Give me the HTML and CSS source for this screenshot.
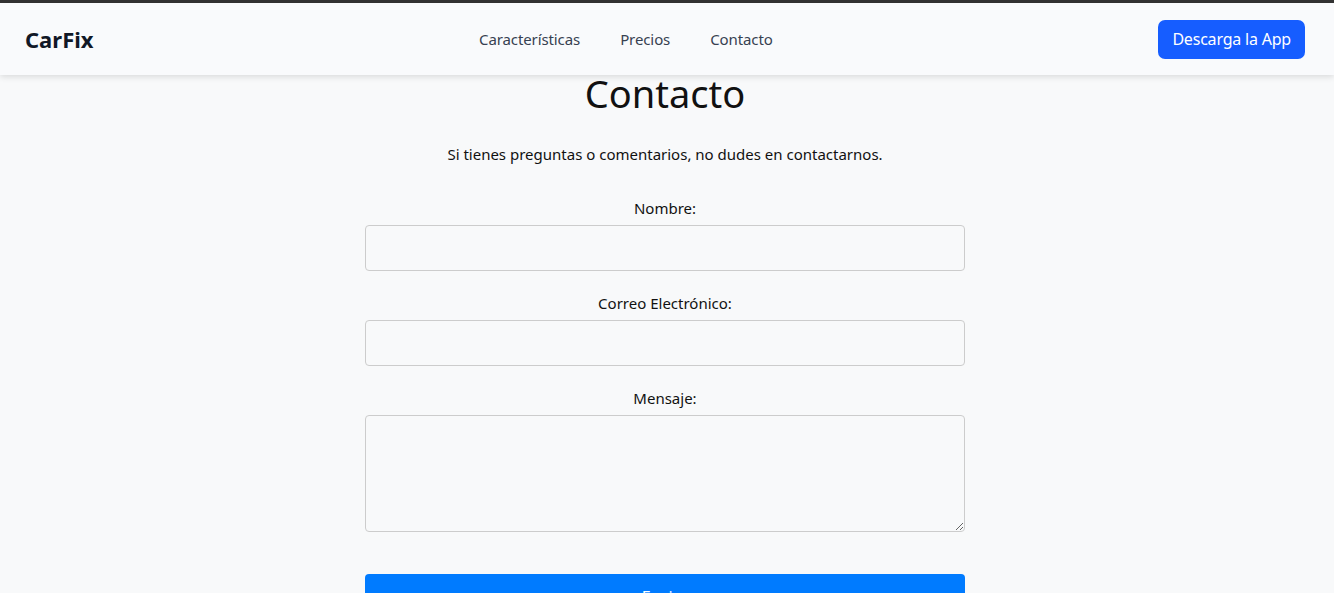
FILE: index.html
```html
<!DOCTYPE html>
<html lang="es">
<head>
<meta charset="utf-8">
<title>CarFix - Contacto</title>
<link rel="stylesheet" href="styles.css">
</head>
<body>
<div class="topline"></div>
<header class="header">
  <div class="logo">CarFix</div>
  <nav class="nav">
    <a href="#" class="nav-link">Características</a>
    <a href="#" class="nav-link">Precios</a>
    <a href="#" class="nav-link">Contacto</a>
  </nav>
  <a href="#" class="cta">Descarga la App</a>
</header>
<main class="main">
  <h1 class="title">Contacto</h1>
  <p class="lead">Si tienes preguntas o comentarios, no dudes en contactarnos.</p>
  <form class="form">
    <label class="label" for="nombre">Nombre:</label>
    <input class="field" id="nombre" type="text">
    <label class="label" for="correo">Correo Electrónico:</label>
    <input class="field" id="correo" type="email">
    <label class="label" for="mensaje">Mensaje:</label>
    <textarea class="field area" id="mensaje"></textarea>
    <button class="submit" type="button">Enviar</button>
  </form>
</main>
</body>
</html>
```
FILE: styles.css
```css
* { box-sizing: border-box; }
html, body { margin: 0; padding: 0; }
body {
  background: #f8f9fa;
  font-family: "Noto Sans", "Open Sans", sans-serif;
  color: #111;
  overflow: hidden;
}
.topline { height: 3px; background: #333; }
.header {
  height: 72px;
  background: #f9fafc;
  box-shadow: 0 2px 6px rgba(0,0,0,0.12);
  display: flex;
  align-items: center;
  padding: 0 29px 0 25px;
  position: relative;
  z-index: 2;
}
.logo {
  font-size: 22px;
  font-weight: 700;
  color: #111827;
  width: 200px;
}
.nav {
  display: flex;
  gap: 40px;
  margin-left: 254px;
}
.nav-link {
  font-size: 15px;
  color: #374151;
  text-decoration: none;
  letter-spacing: -0.1px;
}
.cta {
  margin-left: auto;
  background: #165dff;
  color: #fff;
  text-decoration: none;
  font-size: 16px;
  height: 39px;
  padding: 0 14px 0 14px;
  display: flex;
  align-items: center;
  border-radius: 7px;
  letter-spacing: -0.2px;
}
.main {
  display: flex;
  flex-direction: column;
  align-items: center;
  padding-right: 4px;
}
.title {
  font-size: 38px;
  font-weight: 400;
  margin: -6px 0 0;
  line-height: 48px;
}
.lead {
  font-size: 15px;
  margin: 26px 0 0;
  line-height: 22px;
}
.form {
  width: 600px;
  display: flex;
  flex-direction: column;
  align-items: stretch;
  margin-top: 31px;
}
.label {
  text-align: center;
  font-size: 15px;
  line-height: 24px;
  margin-bottom: 5px;
}
.field {
  height: 46px;
  border: 1px solid #ccc;
  border-radius: 4px;
  background: #f8f9fa;
  margin-bottom: 20px;
  font: inherit;
}
.area {
  height: 117px;
  margin-bottom: 42px;
  resize: vertical;
}
.submit {
  height: 46px;
  background: #007bff;
  color: #fff;
  border: 0;
  border-radius: 4px;
  font: inherit;
  font-size: 16px;
}
```
